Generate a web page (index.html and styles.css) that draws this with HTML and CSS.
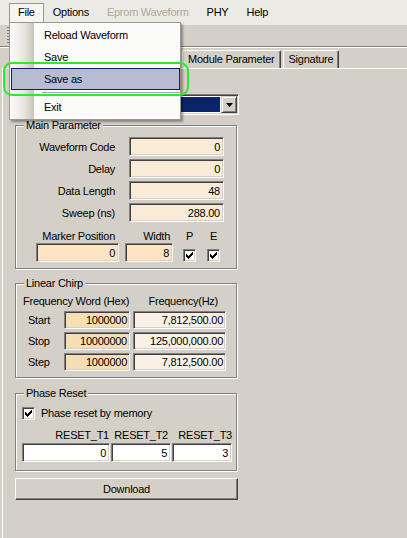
FILE: index.html
```html
<!DOCTYPE html>
<html>
<head>
<meta charset="utf-8">
<title>Waveform</title>
<link rel="stylesheet" href="styles.css">
</head>
<body>
<div class="window">
  <div class="menubar">
    <span class="mi open">File</span>
    <span class="mi">Options</span>
    <span class="mi disabled">Eprom Waveform</span>
    <span class="mi">PHY</span>
    <span class="mi">Help</span>
  </div>
  <div class="toolbar"><span class="grip"></span></div>
  <div class="tabstrip">
    <span class="tab">Module Parameter</span>
    <span class="tab">Signature</span>
  </div>
  <div class="panel">
    <div class="combo">
      <span class="combo-field"><span class="combo-sel"></span></span>
      <span class="combo-btn"><svg width="7" height="4" viewBox="0 0 7 4"><polygon points="0,0 7,0 3.5,4" fill="#000"/></svg></span>
    </div>

    <div class="group g-main">
      <div class="legend">Main Parameter</div>
      <div class="param-grid">
        <span class="plabel">Waveform Code</span><div class="field aw">0</div>
        <span class="plabel">Delay</span><div class="field aw">0</div>
        <span class="plabel">Data Length</span><div class="field aw">48</div>
        <span class="plabel">Sweep (ns)</span><div class="field aw">288.00</div>
      </div>
      <div class="marker">
        <div class="mcol m1"><span class="mlabel">Marker Position</span><div class="field bq">0</div></div>
        <div class="mcol m2"><span class="mlabel">Width</span><div class="field bq">8</div></div>
        <div class="mcol m3"><span class="mlabel c">P</span><span class="check"><svg width="7" height="7" viewBox="0 0 7 7" shape-rendering="crispEdges"><path d="M0 2h1v1h1v1h1v-1h1v-1h1v-1h1v-1h1v3h-1v1h-1v1h-1v1h-1v1h-1v-1h-1v-1h-1z" fill="#000"/></svg></span></div>
        <div class="mcol m4"><span class="mlabel c">E</span><span class="check"><svg width="7" height="7" viewBox="0 0 7 7" shape-rendering="crispEdges"><path d="M0 2h1v1h1v1h1v-1h1v-1h1v-1h1v-1h1v3h-1v1h-1v1h-1v1h-1v1h-1v-1h-1v-1h-1z" fill="#000"/></svg></span></div>
      </div>
    </div>

    <div class="group g-chirp">
      <div class="legend">Linear Chirp</div>
      <div class="chirp-head">
        <span class="h1">Frequency Word (Hex)</span>
        <span class="h2">Frequency(Hz)</span>
      </div>
      <div class="chirp-grid">
        <span class="clabel">Start</span><div class="field wh">1000000</div><div class="field ln">7,812,500.00</div>
        <span class="clabel">Stop</span><div class="field wh">10000000</div><div class="field ln">125,000,000.00</div>
        <span class="clabel">Step</span><div class="field wh">1000000</div><div class="field ln">7,812,500.00</div>
      </div>
    </div>

    <div class="group g-phase">
      <div class="legend">Phase Reset</div>
      <div class="check-row">
        <span class="check"><svg width="7" height="7" viewBox="0 0 7 7" shape-rendering="crispEdges"><path d="M0 2h1v1h1v1h1v-1h1v-1h1v-1h1v-1h1v3h-1v1h-1v1h-1v1h-1v1h-1v-1h-1v-1h-1z" fill="#000"/></svg></span>
        <span>Phase reset by memory</span>
      </div>
      <div class="reset-head">
        <span class="r1">RESET_T1</span><span class="r2">RESET_T2</span><span class="r3">RESET_T3</span>
      </div>
      <div class="reset-fields">
        <div class="field white r1">0</div><div class="field white r2">5</div><div class="field white r3">3</div>
      </div>
    </div>

    <div class="button">Download</div>
  </div>

  <div class="menu">
    <div class="mitem">Reload Waveform</div>
    <div class="mitem">Save</div>
    <div class="mitem hl">Save as</div>
    <div class="msep"></div>
    <div class="mitem">Exit</div>
  </div>
  <div class="ring"></div>
</div>
</body>
</html>
```
FILE: styles.css
```css
* { box-sizing: border-box; }
html, body { margin: 0; padding: 0; }
body {
  width: 407px;
  height: 538px;
  overflow: hidden;
  background: #d4d0c8;
  font-family: "Liberation Sans", Arial, sans-serif;
  font-size: 11px;
  letter-spacing: -0.25px;
  color: #000;
}
.window { position: relative; width: 407px; height: 538px; }

/* menu bar */
.menubar {
  height: 25px;
  background: #ebeae4;
  display: flex;
  padding: 3px 0 0 9px;
}
.mi {
  height: 19px;
  padding: 0 8px;
  border: 1px solid transparent;
  border-bottom: 0;
  line-height: 17px;
  white-space: nowrap;
}
.mi.open { background: #f6f5f2; border-color: #9b978c; }
.mi.disabled { color: #aca899; }

/* toolbar */
.toolbar {
  height: 22px;
  border-bottom: 1px solid #808080;
  box-shadow: 0 1px 0 #fff;
  display: flex;
}
.grip {
  width: 2px;
  height: 17px;
  margin: 2px 0 0 7px;
  background: repeating-linear-gradient(#808080 0 1px, transparent 1px 3px);
}

/* tabs */
.tabstrip {
  height: 21px;
  display: flex;
  gap: 2px;
  padding: 3px 0 0 182px;
}
.tab {
  height: 18px;
  padding: 0 5px;
  border: 1px solid #fff;
  border-right-color: #404040;
  border-bottom: 0;
  border-radius: 2px 2px 0 0;
  box-shadow: inset -1px 0 #808080;
  line-height: 16px;
  white-space: nowrap;
}

/* panel */
.panel {
  margin-left: 2px;
  height: 470px;
  border-left: 1px solid #fff;
  border-top: 1px solid #fff;
  padding: 25px 0 0 12px;
}

/* sunken field */
.field {
  height: 19px;
  border: 1px solid;
  border-color: #808080 #fff #fff #808080;
  box-shadow: inset 1px 1px #404040, inset -1px -1px #d4d0c8;
  display: flex;
  align-items: center;
  justify-content: flex-end;
  padding-right: 3px;
  white-space: nowrap;
}
.aw { background: #faebd7; }
.bq { background: #ffe4c4; }
.wh { background: #f5deb3; }
.ln { background: #faf0e6; }
.white { background: #fff; }

/* combo */
.combo {
  display: flex;
  width: 224px;
  height: 21px;
  border: 1px solid;
  border-color: #808080 #fff #fff #808080;
  box-shadow: inset 1px 1px #404040, inset -1px -1px #d4d0c8;
  padding: 1px;
  background: #fff;
}
.combo-field { flex: 1; padding: 1px 1px 1px 1px; }
.combo-sel { display: block; height: 100%; background: #0a246a; }
.combo-btn {
  width: 16px;
  border: 1px solid;
  border-color: #d4d0c8 #404040 #404040 #d4d0c8;
  box-shadow: inset 1px 1px #fff, inset -1px -1px #808080;
  background: #d4d0c8;
  display: flex;
  align-items: center;
  justify-content: center;
}

/* group boxes */
.group {
  width: 222px;
  border: 1px solid #808080;
  box-shadow: inset 1px 1px #fff, 1px 1px 0 #fff;
}
.legend {
  margin: -7px 0 0 8px;
  padding: 0 2px;
  width: max-content;
  line-height: 13px;
  background: #d4d0c8;
}
.g-main { margin-top: 10px; padding-bottom: 6px; }
.param-grid {
  margin-top: 5px;
  display: grid;
  grid-template-columns: 99px 95px;
  column-gap: 14px;
  row-gap: 3px;
  grid-auto-rows: 19px;
}
.plabel { align-self: center; text-align: right; white-space: nowrap; }

.marker { display: flex; margin-top: 8px; }
.mcol { display: flex; flex-direction: column; justify-content: space-between; height: 32px; }
.mlabel { line-height: 13px; text-align: right; white-space: nowrap; }
.mlabel.c { text-align: center; }
.m1 { margin-left: 20px; width: 83px; }
.m1 .mlabel { padding-right: 4px; }
.m2 { margin-left: 6px; width: 48px; }
.m2 .mlabel { padding-right: 3px; }
.m3 { margin-left: 10px; width: 13px; }
.m4 { margin-left: 11px; width: 13px; }

.check {
  width: 13px;
  height: 13px;
  border: 1px solid;
  border-color: #808080 #fff #fff #808080;
  box-shadow: inset 1px 1px #404040, inset -1px -1px #d4d0c8;
  background: #fff;
  display: flex;
  align-items: center;
  justify-content: center;
  flex: none;
}

.g-chirp { margin-top: 14px; padding-bottom: 6px; }
.chirp-head { display: flex; margin-top: 5px; line-height: 13px; white-space: nowrap; }
.chirp-head .h1 { margin-left: 7px; }
.chirp-head .h2 { margin-left: auto; margin-right: 18px; }
.chirp-grid {
  margin-top: 3px;
  display: grid;
  grid-template-columns: 45px 66px 93px;
  column-gap: 3px;
  row-gap: 3px;
  grid-auto-rows: 18px;
}
.chirp-grid .field { height: 18px; padding-right: 2px; }
.clabel { align-self: center; padding-left: 12px; }

.g-phase { margin-top: 15px; padding-bottom: 8px; }
.check-row { display: flex; align-items: center; gap: 6px; margin: 7px 0 0 6px; line-height: 13px; }
.reset-head, .reset-fields { display: flex; gap: 1px; margin-left: 6px; }
.reset-head { margin-top: 9px; line-height: 13px; }
.reset-fields { margin-top: 1px; }
.reset-head span { text-align: right; white-space: nowrap; }
.r1 { width: 88px; }
.r2 { width: 60px; }
.r3 { width: 60px; }
.reset-head .r1 { padding-right: 1px; }
.reset-head .r2 { padding-right: 3px; }
.reset-head .r3 { padding-right: 0; }

.button {
  margin-top: 7px;
  width: 223px;
  height: 22px;
  border: 1px solid;
  border-color: #fff #404040 #404040 #fff;
  box-shadow: inset -1px -1px #808080;
  display: flex;
  align-items: center;
  justify-content: center;
}

/* dropdown menu overlay */
.menu {
  position: absolute;
  left: 9px;
  top: 22px;
  width: 172px;
  border: 1px solid #9b978c;
  padding: 1px 0;
  background: #fbfbf9 linear-gradient(to right, #fafaf8 0%, #e8e6e0 55%, #c8c5bc 100%) 1px 0 / 23px 100% no-repeat;
  box-shadow: 2px 2px 2px rgba(0, 0, 0, 0.35);
}
.mitem {
  height: 22px;
  line-height: 20px;
  margin-left: 1px;
  padding-left: 32px;
  border: 1px solid transparent;
  white-space: nowrap;
}
.mitem.hl { background: #b6bdd2; border-color: #0a246a; }
.msep { height: 1px; margin: 2px 0 3px 32px; background: #a6a6a6; }

/* annotation ring */
.ring {
  position: absolute;
  left: 3px;
  top: 62px;
  width: 186px;
  height: 34px;
  border: 2px solid #2ee82e;
  border-radius: 9px;
}
```
